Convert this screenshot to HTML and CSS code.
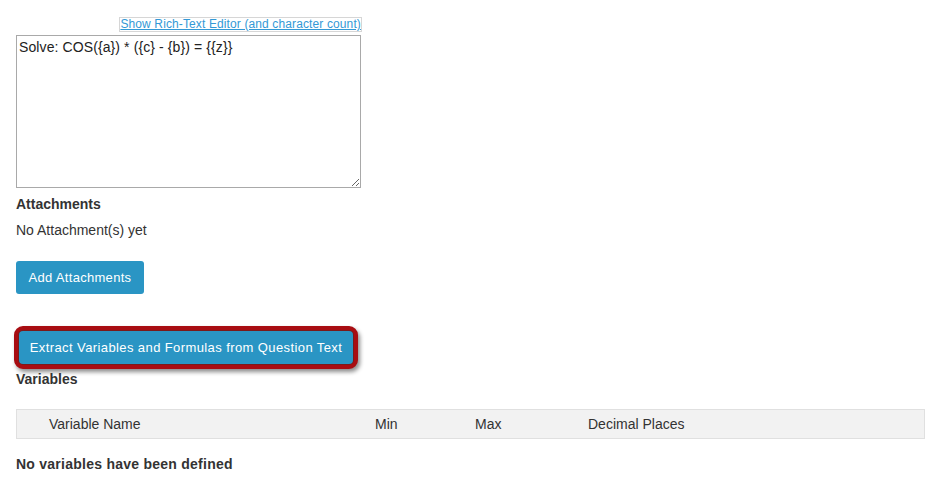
FILE: index.html
```html
<!DOCTYPE html>
<html>
<head>
<meta charset="utf-8">
<link rel="stylesheet" href="styles.css">
</head>
<body>
<div class="page">
  <div class="editor">
    <div class="editor-top">
      <a class="rte-link" href="#">Show Rich-Text Editor (and character count)</a>
    </div>
    <textarea class="question">Solve: COS({a}) * ({c} - {b}) = {{z}}</textarea>
  </div>
  <h4 class="label first">Attachments</h4>
  <p class="note">No Attachment(s) yet</p>
  <button class="btn add">Add Attachments</button>
  <div class="highlight">
    <button class="btn extract">Extract Variables and Formulas from Question Text</button>
  </div>
  <h4 class="label">Variables</h4>
  <div class="vtable">
    <div class="vhead">
      <span class="c-name">Variable Name</span>
      <span class="c-min">Min</span>
      <span class="c-max">Max</span>
      <span class="c-dec">Decimal Places</span>
    </div>
  </div>
  <p class="empty">No variables have been defined</p>
</div>
</body>
</html>
```

FILE: styles.css
```css
* { box-sizing: border-box; }
html, body { margin: 0; padding: 0; background: #fff; }
body {
  font-family: "Liberation Sans", Arial, sans-serif;
  font-size: 14px;
  color: #333;
}
.page { padding: 17px 15px 0 16px; }
.editor { width: 345px; }
.editor-top { display: flex; justify-content: flex-end; }
.rte-link {
  font-size: 12px;
  letter-spacing: 0.12px;
  line-height: 13px;
  color: #3399d6;
  text-decoration: underline;
  border: 1px solid #d6d6d6;
  padding: 0;
  margin-right: -1px;
}
.question {
  display: block;
  width: 345px;
  height: 153px;
  margin-top: 3px;
  border: 1px solid #a9a9a9;
  padding: 2px 2px;
  font-family: "Liberation Sans", Arial, sans-serif;
  font-size: 14px;
  letter-spacing: 0.1px;
  line-height: 18px;
  color: #222;
  resize: vertical;
  outline: none;
}
.label {
  margin: 0;
  font-size: 14px;
  font-weight: bold;
  line-height: 20px;
  color: #333;
}
.label.first { margin-top: 6px; }
.note { margin: 6px 0 0; line-height: 20px; }
.btn {
  display: block;
  border: 0;
  border-radius: 3px;
  background: #2a95c4;
  color: #fff;
  font-family: "Liberation Sans", Arial, sans-serif;
  font-size: 13px;
  letter-spacing: 0.3px;
  height: 33px;
  cursor: pointer;
}
.add { margin-top: 21px; width: 128px; padding: 0 10px; }
.highlight {
  display: inline-block;
  margin: 32px 0 0 -2px;
  border: 4px solid #a80d12;
  border-radius: 9px;
  padding: 1px;
  background: #7a1a1a;
  box-shadow: 2px 3px 4px rgba(0, 0, 0, 0.45);
}
.extract { width: 334px; padding: 0 8px; border-radius: 4px; letter-spacing: 0.4px; }
.highlight + .label { margin-top: 0; }
.vtable {
  margin-top: 20px;
  width: 909px;
  border: 1px solid #e0e0e0;
  background: #f2f2f2;
}
.vhead {
  display: grid;
  grid-template-columns: 326px 100px 113px 1fr;
  height: 28px;
  align-items: center;
  padding-left: 32px;
  line-height: 20px;
  color: #333;
}
.empty {
  margin: 15px 0 0;
  font-weight: bold;
  letter-spacing: 0.25px;
  line-height: 20px;
  color: #333;
}
```
